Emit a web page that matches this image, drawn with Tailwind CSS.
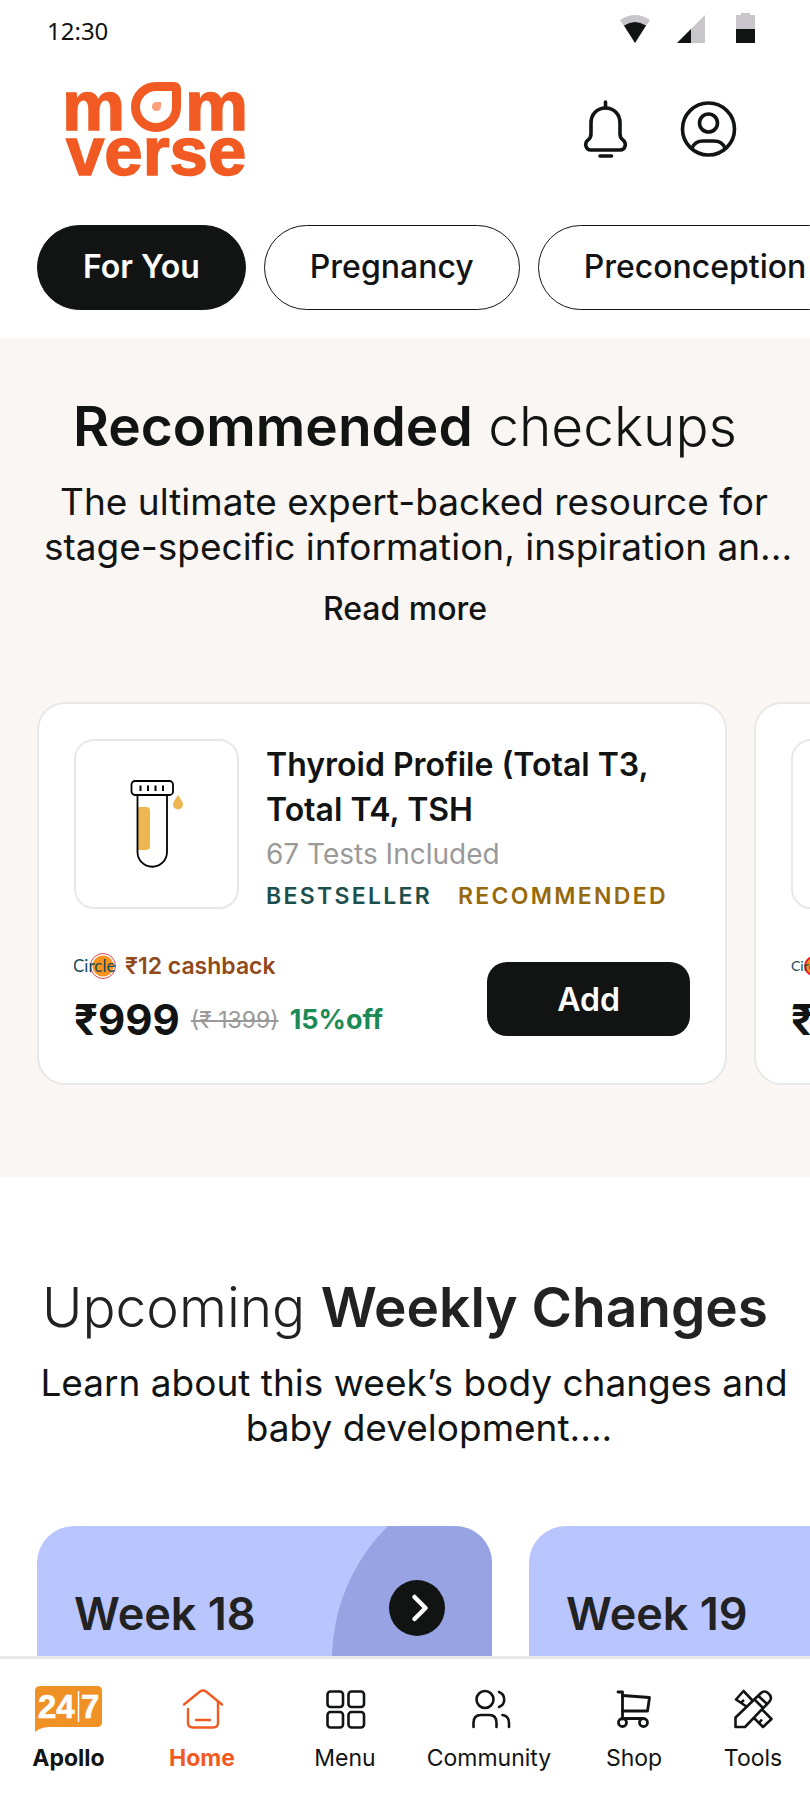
<!DOCTYPE html>
<html lang="en">
<head>
<meta charset="utf-8">
<meta name="viewport" content="width=device-width, initial-scale=1">
<title>Momverse</title>
<script src="https://cdn.jsdelivr.net/npm/@tailwindcss/browser@4"></script>
</head>
<body class="flex h-screen flex-col overflow-hidden bg-white font-['Inter',sans-serif] text-[#121414]">

<!-- Status bar -->
<div class="flex h-[60px] shrink-0 items-center justify-between pr-[55px] pl-[47px]">
  <span class="pt-[2px] font-['Noto_Sans',sans-serif] text-[24px] leading-8">12:30</span>
  <div class="flex items-center gap-[26px]">
    <svg class="h-[30px] w-[32px]" viewBox="0 0 32 30" aria-hidden="true"><path d="M1 5Q16 -5 31 5L16 28Z" fill="#c8c5cb"/><path d="M5 10.500Q16 3.500 27 10.500L16 28Z" fill="#121414"/></svg>
    <svg class="h-[30px] w-[28px]" viewBox="0 0 28 30" aria-hidden="true"><path d="M0 28L28 0V28Z" fill="#c8c5cb"/><path d="M0 28L14 14V28Z" fill="#121414"/></svg>
    <svg class="ml-[5px] h-[34px] w-[19px]" viewBox="0 0 19 34" aria-hidden="true"><path d="M5 0H14V2H19V30H0V2H5Z" fill="#c8c5cb"/><path d="M0 16H19V30H0Z" fill="#121414"/></svg>
  </div>
</div>

<main class="min-h-0 flex-1 overflow-x-hidden overflow-y-auto [scrollbar-width:none]">
  <header class="flex items-start justify-between pt-[5px] pr-[73px] pl-[60px]">
    <a href="#" aria-label="Momverse">
      <svg class="h-[125px] w-[194px]" viewBox="-4 -15 194 125" fill="#f15a22" stroke="#f15a22" font-family="Liberation Sans, sans-serif" font-weight="700" font-size="71">
        <text x="-2" y="49.500" stroke-width="1.500">m</text>
        <text x="121" y="49.500" stroke-width="1.500">m</text>
        <text x="2" y="94.500" font-size="69" stroke-width="1.500">verse</text>
        <path d="M92 6.500H110Q112.500 6.500 112.500 9V27A20.500 20.500 0 1 1 92 6.500Z" fill="none" stroke-width="9"/>
        <path d="M92 22H97V27A4.500 4.500 0 1 1 92 22Z" fill="#ffa07c" stroke="none"/>
      </svg>
    </a>
    <div class="flex gap-[50px] pt-[31px]">
      <button type="button" aria-label="Notifications">
        <svg class="h-[66px] w-[46px]" viewBox="0 0 46 66" fill="none" stroke="#121414" stroke-width="3.600" stroke-linecap="round" stroke-linejoin="round"><path d="M22.500 6V12"/><path d="M22.500 12C14 12 8 18.500 8 27V38Q8 42 5 44C1 47 2.500 54 8 54H37C42.500 54 44 47 40 44Q37 42 37 38V27C37 18.500 31 12 22.500 12Z"/><path d="M17 60H28.500"/></svg>
      </button>
      <button type="button" aria-label="Profile">
        <svg class="h-[66px] w-[58px]" viewBox="0 0 58 66" fill="none" stroke="#121414" stroke-width="3.600"><circle cx="29.500" cy="33" r="26"/><circle cx="29.500" cy="27" r="9"/><path d="M13 52Q16 45 24 45H35Q43 45 46 52"/></svg>
      </button>
    </div>
  </header>

  <nav aria-label="Stages" class="flex gap-[18px] overflow-hidden pt-[35px] pb-[28px] pl-[37px] text-[32px] leading-10 font-medium">
    <button type="button" class="h-[85px] shrink-0 rounded-full border border-[#121414] bg-[#121414] px-[45px] pb-[2px] font-semibold text-white">For You</button>
    <button type="button" class="h-[85px] shrink-0 rounded-full border border-[#121414] px-[45px] pb-[2px]">Pregnancy</button>
    <button type="button" class="h-[85px] shrink-0 rounded-full border border-[#121414] px-[45px] pb-[2px]">Preconception</button>
  </nav>

  <section class="bg-[#faf6f3] pt-[54px] pb-[92px] text-center">
    <h1 class="text-[55px] leading-[68px] font-light"><strong class="font-semibold">Recommended</strong> checkups</h1>
    <p class="mt-[19px] pl-[18px] text-[37px] leading-[45px]">The ultimate expert-backed resource for <span class="block pl-[8px]">stage-specific information, inspiration an...</span></p>
    <button type="button" class="mt-[17px] text-[32px] leading-[45px] font-medium">Read more</button>

    <div class="mt-[71px] flex gap-[27px] overflow-hidden pl-[37px] text-left">
      <article class="w-[690px] shrink-0 rounded-[28px] border-2 border-[#e8e8e8] bg-white px-[35px] pt-[35px] pb-[37px]">
        <div class="flex gap-[27px]">
          <div class="flex h-[170px] w-[165px] shrink-0 items-center justify-center rounded-[20px] border-2 border-[#e8e8e8]">
            <svg class="h-[92px] w-[56px]" viewBox="0 0 56 92" fill="none" aria-hidden="true"><path d="M9 29H17Q21 29 21 33V68Q21 72 17 72H9Z" fill="#edb651"/><g stroke="#000" stroke-width="1.800"><rect x="2.500" y="3" width="41.500" height="14" rx="3.500"/><path d="M8.500 17V74A14.700 14.700 0 0 0 38 74V17"/><path d="M11.500 7.500V13M19 7.500V13M26.500 7.500V13M34 7.500V13" stroke-width="2"/></g><path d="M49 17Q54 24 54 26.500A5 5 0 0 1 44 26.500Q44 24 49 17Z" fill="#edb651"/></svg>
          </div>
          <div class="min-w-0 flex-1 pt-[3px]">
            <h2 class="text-[32px] leading-[45px] font-semibold">Thyroid Profile (Total T3, Total T4, TSH</h2>
            <p class="text-[28px] leading-[45px] text-[#999]">67 Tests Included</p>
            <p class="flex gap-[26px] text-[23px] leading-[38px] font-semibold tracking-widest"><span class="text-[#1d4f4c]">BESTSELLER</span><span class="text-[#96690c]">RECOMMENDED</span></p>
          </div>
        </div>
        <div class="mt-[34px] flex items-center justify-between">
          <div>
            <div class="flex items-center gap-[9px]">
              <svg class="h-[28px] w-[42px]" viewBox="0 0 42 28" role="img" aria-label="Circle"><circle cx="29" cy="14" r="12.500" fill="#fff" stroke="#e8424f"/><circle cx="29" cy="14" r="10.500" fill="#f8941d"/><text x="-1" y="20" font-family="Lato, sans-serif" font-size="17" fill="#17495a">Circle</text></svg>
              <span class="text-[23px] leading-[34px] font-semibold text-[#914a1c]">₹12 cashback</span>
            </div>
            <div class="mt-[11px] flex items-center gap-[11px]">
              <strong class="text-[42px] leading-[52px] font-bold">₹999</strong>
              <s class="text-[23px] text-[#999]">(₹ 1399)</s>
              <span class="text-[27px] font-bold text-[#1c8a57]">15%off</span>
            </div>
          </div>
          <button type="button" class="mt-[3px] h-[74px] w-[203px] shrink-0 rounded-[20px] bg-[#121414] pt-[2px] text-[32px] font-semibold text-white">Add</button>
        </div>
      </article>

      <article class="w-[690px] shrink-0 rounded-[28px] border-2 border-[#e8e8e8] bg-white px-[35px] pt-[35px] pb-[37px]">
        <div class="h-[170px] w-[165px] rounded-[20px] border-2 border-[#e8e8e8]"></div>
        <div class="mt-[40px] flex h-[34px] items-center">
          <svg class="h-[28px] w-[42px]" viewBox="0 0 42 28" role="img" aria-label="Circle"><circle cx="23" cy="14" r="9" fill="#f8941d" stroke="#e6202e" stroke-width="2"/><text x="0" y="19" font-family="Lato, sans-serif" font-size="14" fill="#17495a">Circle</text></svg>
        </div>
        <strong class="mt-[11px] block text-[42px] leading-[52px] font-bold">₹999</strong>
      </article>
    </div>
  </section>

  <section class="pt-[96px] text-center">
    <h2 class="text-[55px] leading-[68px] font-light text-[#222]">Upcoming <strong class="font-semibold">Weekly Changes</strong></h2>
    <p class="mt-[19px] pl-[18px] text-[37px] leading-[45px]">Learn about this week’s body changes and <span class="block pl-[30px]">baby development....</span></p>
    <div class="mt-[76px] flex gap-[37px] overflow-hidden pl-[37px] text-left">
      <article class="relative h-[320px] w-[455px] shrink-0 overflow-hidden rounded-[37px] bg-[#b9c5ff]">
        <div class="absolute -top-[54px] left-[295px] size-[376px] rounded-full bg-[#97a3e2]"></div>
        <div class="relative flex items-start justify-between pt-[54px] pr-[47px] pl-[37px]">
          <h3 class="text-[45px] leading-[68px] font-semibold text-[#222]">Week 18</h3>
          <button type="button" aria-label="Open week 18" class="flex size-[56px] items-center justify-center rounded-full bg-[#121414]"><svg class="size-[56px]" viewBox="0 0 56 56" fill="none" stroke="#fff" stroke-width="4.500" stroke-linecap="round" stroke-linejoin="round" aria-hidden="true"><path d="M25.500 17L36.500 28L25.500 39"/></svg></button>
        </div>
      </article>
      <article class="h-[320px] w-[455px] shrink-0 rounded-[37px] bg-[#b9c5ff] pt-[54px] pl-[37px]">
        <h3 class="text-[45px] leading-[68px] font-semibold text-[#222]">Week 19</h3>
      </article>
    </div>
  </section>
</main>

<nav aria-label="Main" class="grid h-[145px] shrink-0 grid-cols-[137fr_130fr_156fr_132fr_158fr_80fr] border-t-3 border-[#e8e8e8] bg-white pt-[24px] pr-[17px] text-[23px] leading-[34px]">
  <a href="#" class="flex flex-col items-center gap-[4px] font-bold">
    <svg class="h-[54px] w-[68px]" viewBox="0 0 68 54" aria-hidden="true"><path d="M6 3H62Q67 3 67 8V39Q67 44 62 44H15Q6 44 0 49V8Q0 3 6 3Z" fill="#f09125"/><g font-family="Liberation Sans, sans-serif" font-weight="700" font-size="33" fill="#fff" stroke="#fff" stroke-width=".6"><text x="3" y="35">24</text><text x="46" y="35">7</text></g><path d="M43.500 8V39" stroke="#fff" stroke-width="1.500"/></svg>
    <span>Apollo</span>
  </a>
  <a href="#" aria-current="page" class="flex flex-col items-center gap-[4px] font-bold text-[#f15a22]">
    <svg class="h-[54px] w-[54px]" viewBox="0 0 54 54" fill="none" stroke="currentColor" stroke-width="2.400" stroke-linecap="round" stroke-linejoin="round" aria-hidden="true"><path d="M9 21.500L25 8.500Q28 6.500 31 8.500L47 21.500"/><path d="M13 26V40Q13 44.500 18 44.500H38Q43 44.500 43 40V19"/><path d="M21 37H35"/></svg>
    <span>Home</span>
  </a>
  <a href="#" class="flex flex-col items-center gap-[4px]">
    <svg class="h-[54px] w-[54px]" viewBox="0 0 54 54" fill="none" stroke="currentColor" stroke-width="2.600" aria-hidden="true"><rect x="9.500" y="8.500" width="15.500" height="15.500" rx="3"/><rect x="30.500" y="8.500" width="15.500" height="15.500" rx="3"/><rect x="9.500" y="29" width="15.500" height="15.500" rx="3"/><rect x="30.500" y="29" width="15.500" height="15.500" rx="3"/></svg>
    <span>Menu</span>
  </a>
  <a href="#" class="flex flex-col items-center gap-[4px]">
    <svg class="h-[54px] w-[54px]" viewBox="0 0 54 54" fill="none" stroke="currentColor" stroke-width="2.600" stroke-linecap="round" aria-hidden="true"><circle cx="23" cy="16.500" r="8.500"/><path d="M37 9A8 8 0 0 1 37 24"/><path d="M11.500 44V40Q11.500 32 19 32H27.500Q34.500 32 34.500 40V44"/><path d="M40.500 32Q47 33 47 40V44"/></svg>
    <span>Community</span>
  </a>
  <a href="#" class="flex flex-col items-center gap-[4px]">
    <svg class="h-[54px] w-[54px]" viewBox="0 0 54 54" fill="none" stroke="currentColor" stroke-width="2.800" stroke-linecap="round" stroke-linejoin="round" aria-hidden="true"><path d="M11 9H15.500V36"/><path d="M15.500 12.500L42.500 14.500L40.500 28H15.500"/><path d="M18 35.500H35"/><circle cx="15.500" cy="39.500" r="4"/><circle cx="36.500" cy="39.500" r="4"/></svg>
    <span>Shop</span>
  </a>
  <a href="#" class="flex flex-col items-center gap-[4px]">
    <svg class="h-[54px] w-[54px]" viewBox="0 0 54 54" fill="none" stroke="currentColor" stroke-width="2.600" stroke-linejoin="round" aria-hidden="true"><path d="M9.500 44V34.500L35 10Q38.500 7 42 10Q47 14 43.500 18.500L19 44Z"/><path d="M32.500 13L41 21M28.500 16.500L37 25"/><path d="M20.500 23.500L10 16.500L17.500 8L26.500 17.500M35.500 26L45.500 36L37 44L27.500 34.500M14.500 20L18 17M33 40L36 36.500"/></svg>
    <span>Tools</span>
  </a>
</nav>
</body>
</html>
